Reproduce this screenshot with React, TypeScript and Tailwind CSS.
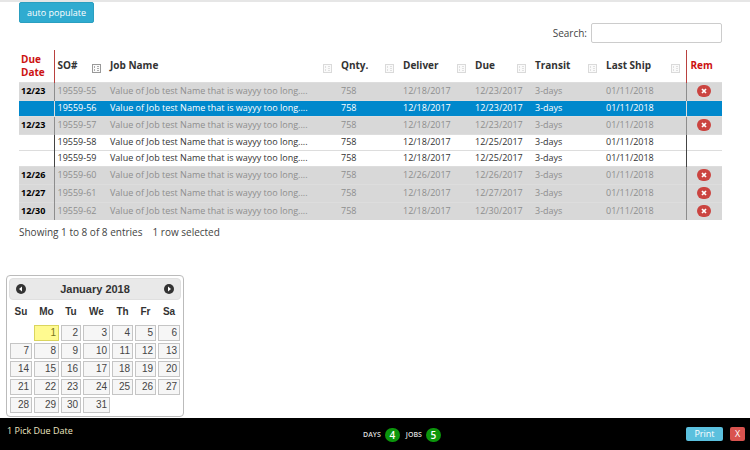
import { useState } from "react";

type Job = {
  so: string;
  deliver: string;
  due: string;
  pick?: string;
};

const jobs: Job[] = [
  { so: "19559-55", deliver: "12/18/2017", due: "12/23/2017", pick: "12/23" },
  { so: "19559-56", deliver: "12/18/2017", due: "12/23/2017" },
  { so: "19559-57", deliver: "12/18/2017", due: "12/23/2017", pick: "12/23" },
  { so: "19559-58", deliver: "12/18/2017", due: "12/25/2017" },
  { so: "19559-59", deliver: "12/18/2017", due: "12/25/2017" },
  { so: "19559-60", deliver: "12/26/2017", due: "12/26/2017", pick: "12/26" },
  { so: "19559-61", deliver: "12/18/2017", due: "12/27/2017", pick: "12/27" },
  { so: "19559-62", deliver: "12/18/2017", due: "12/30/2017", pick: "12/30" },
];

const sortable = ["SO#", "Job Name", "Qnty.", "Deliver", "Due", "Transit", "Last Ship"];

const weeks: (number | null)[][] = [
  [null, 1, 2, 3, 4, 5, 6],
  [7, 8, 9, 10, 11, 12, 13],
  [14, 15, 16, 17, 18, 19, 20],
  [21, 22, 23, 24, 25, 26, 27],
  [28, 29, 30, 31, null, null, null],
];

function SortIcon({ active }: { active: boolean }) {
  return (
    <svg viewBox="0 0 9 9" className={`mt-1.5 size-[9px] shrink-0 ${active ? "text-[#999]" : "text-[#dadada]"}`} aria-hidden="true">
      <rect x="0.5" y="0.5" width="8" height="8" fill="#fafafa" stroke="currentColor" />
      <path d="M2.5 2v2M5 2.5h2M2.5 5v2M5 4.5h2M5 6.5h2" stroke="currentColor" strokeOpacity="0.8" fill="none" />
    </svg>
  );
}

function RemoveIcon() {
  return (
    <svg viewBox="0 0 14 12" className="h-3 w-3.5" aria-hidden="true">
      <rect width="14" height="12" rx="6" fill="#cb4440" />
      <path d="M5 4l4 4M9 4L5 8" stroke="#fff" strokeWidth="1.7" fill="none" />
    </svg>
  );
}

function ArrowIcon({ next }: { next?: boolean }) {
  return (
    <svg viewBox="0 0 10 10" className="size-2.5" aria-hidden="true">
      <circle cx="5" cy="5" r="5" fill="#333" />
      <path d={next ? "M4 2.5L7 5L4 7.5Z" : "M6 2.5L3 5L6 7.5Z"} fill="#fff" />
    </svg>
  );
}

function JobsTable() {
  const [selected, setSelected] = useState("19559-56");
  return (
    <table className="w-full table-fixed border-collapse text-left text-[9px] leading-3">
      <colgroup>
        <col className="w-[35px]" />
        <col className="w-[53px]" />
        <col />
        <col className="w-[62px]" />
        <col className="w-[72px]" />
        <col className="w-[60px]" />
        <col className="w-[71px]" />
        <col className="w-[83px]" />
        <col className="w-9" />
      </colgroup>
      <thead className="text-[10px] leading-[13px] text-[#333]">
        <tr className="h-8">
          <th className="border-r border-[#b9413f] pl-0.5 text-[#cc1111]">Due Date</th>
          {sortable.map((name, i) => (
            <th key={name} className="pr-1.5 pl-[3px]">
              <span className="flex items-center justify-between whitespace-nowrap">
                {name}
                <SortIcon active={i === 0} />
              </span>
            </th>
          ))}
          <th className="border-l border-[#b9413f] pl-1 text-[#cc1111]">Rem</th>
        </tr>
      </thead>
      <tbody>
        {jobs.map((job) => {
          const isSelected = job.so === selected;
          const tone = isSelected
            ? "h-4 bg-[#0088cc] text-white"
            : job.pick
              ? "h-[18px] bg-[#d8d8d8] text-[#8e8e8e]"
              : "h-4 bg-white text-[#333]";
          const line = isSelected ? "border-x-[#dddddd]" : job.pick ? "border-x-[#8d8d8d]" : "border-x-[#444]";
          const cell = "border-t border-t-[#dddddd] pl-[3px] whitespace-nowrap";
          return (
            <tr key={job.so} className={tone} onClick={() => setSelected(job.so)}>
              <td className={`border-t border-r border-t-[#dddddd] pl-0.5 font-bold text-black ${line}`}>{job.pick}</td>
              <td className={cell}>{job.so}</td>
              <td className={cell}>Value of Job test Name that is wayyy too long....</td>
              <td className={cell}>758</td>
              <td className={cell}>{job.deliver}</td>
              <td className={cell}>{job.due}</td>
              <td className={cell}>3-days</td>
              <td className={cell}>01/11/2018</td>
              <td className={`border-t border-l border-t-[#dddddd] ${line}`}>
                {job.pick && (
                  <button type="button" aria-label={`Remove ${job.so}`} className="mx-auto block">
                    <RemoveIcon />
                  </button>
                )}
              </td>
            </tr>
          );
        })}
      </tbody>
    </table>
  );
}

function Calendar() {
  return (
    <section className="w-[178px] rounded-sm border border-[#bbb] bg-white p-0.5 font-['Liberation_Sans',Arial,sans-serif] text-[#333]">
      <header className="flex h-[22px] items-center justify-between rounded-sm border border-[#e0e0e0] bg-[#e9e9e9] px-1.5">
        <button type="button" aria-label="Previous month"><ArrowIcon /></button>
        <h2 className="text-[11px] font-bold">January 2018</h2>
        <button type="button" aria-label="Next month"><ArrowIcon next /></button>
      </header>
      <table className="w-full table-fixed border-collapse text-[10px] leading-3">
        <colgroup>
          <col className="w-6" />
          <col className="w-[27px]" />
          <col className="w-[22px]" />
          <col className="w-[29px]" />
          <col className="w-[23px]" />
          <col className="w-[23px]" />
          <col />
        </colgroup>
        <thead>
          <tr className="h-6">
            {["Su", "Mo", "Tu", "We", "Th", "Fr", "Sa"].map((day) => (
              <th key={day} className="p-0 text-center font-bold">{day}</th>
            ))}
          </tr>
        </thead>
        <tbody>
          {weeks.map((week, i) => (
            <tr key={i} className="h-[18px]">
              {week.map((day, j) => (
                <td key={j} className="p-px">
                  {day && (
                    <button
                      type="button"
                      className={`block h-4 w-full border pr-0.5 text-right ${day === 1 ? "border-[#dad55e] bg-[#fffa90] text-[#777620]" : "border-[#c5c5c5] bg-[#f6f6f6] text-[#454545]"}`}
                    >
                      {day}
                    </button>
                  )}
                </td>
              ))}
            </tr>
          ))}
        </tbody>
      </table>
    </section>
  );
}

function Count({ label, value }: { label: string; value: number }) {
  return (
    <span className="flex items-center gap-1 text-[7px] font-semibold text-[#ddd]">
      {label}
      <span className="flex h-3.5 w-[15px] items-center justify-center rounded-full bg-[#0c960c] text-[10px] text-white">{value}</span>
    </span>
  );
}

export default function App() {
  return (
    <div className="flex min-h-screen flex-col bg-white font-['Open_Sans',sans-serif] text-[#444]">
      <div className="h-0.5 bg-[#e6e6e6]" />
      <main className="pr-7 pl-[19px]">
        <button type="button" className="block h-[21px] w-[75px] rounded-xs border border-[#2a9fc0] bg-[#2fabd0] text-[9px] leading-4 whitespace-nowrap text-white">
          auto populate
        </button>
        <div className="flex items-center justify-end gap-1 text-[10px]">
          <label htmlFor="search">Search:</label>
          <input id="search" type="search" className="h-5 w-[131px] rounded-xs border border-[#ccc] bg-white px-1 outline-none" />
        </div>
        <div className="pt-[7px]">
          <JobsTable />
        </div>
        <p className="flex gap-2.5 pt-1 text-[10px] leading-4">
          <span>Showing 1 to 8 of 8 entries</span>
          <span>1 row selected</span>
        </p>
      </main>
      <div className="px-1.5 pt-[35px]">
        <Calendar />
      </div>
      <footer className="mt-auto grid h-8 grid-cols-[1fr_auto_1fr] items-center bg-black pr-[5px] pl-[7px]">
        <p className="pb-1.5 text-[9px] text-[#eee6c0]">1 Pick Due Date</p>
        <div className="flex gap-1.5 pt-0.5 pl-[52px]">
          <Count label="DAYS" value={4} />
          <Count label="JOBS" value={5} />
        </div>
        <div className="flex justify-end gap-[7px] text-[9px] leading-3 text-white">
          <button type="button" className="h-3.5 w-[37px] rounded-xs bg-[#5bc0de]">Print</button>
          <button type="button" aria-label="Close" className="h-3.5 w-[15px] rounded-xs bg-[#d9534f]">X</button>
        </div>
      </footer>
    </div>
  );
}
